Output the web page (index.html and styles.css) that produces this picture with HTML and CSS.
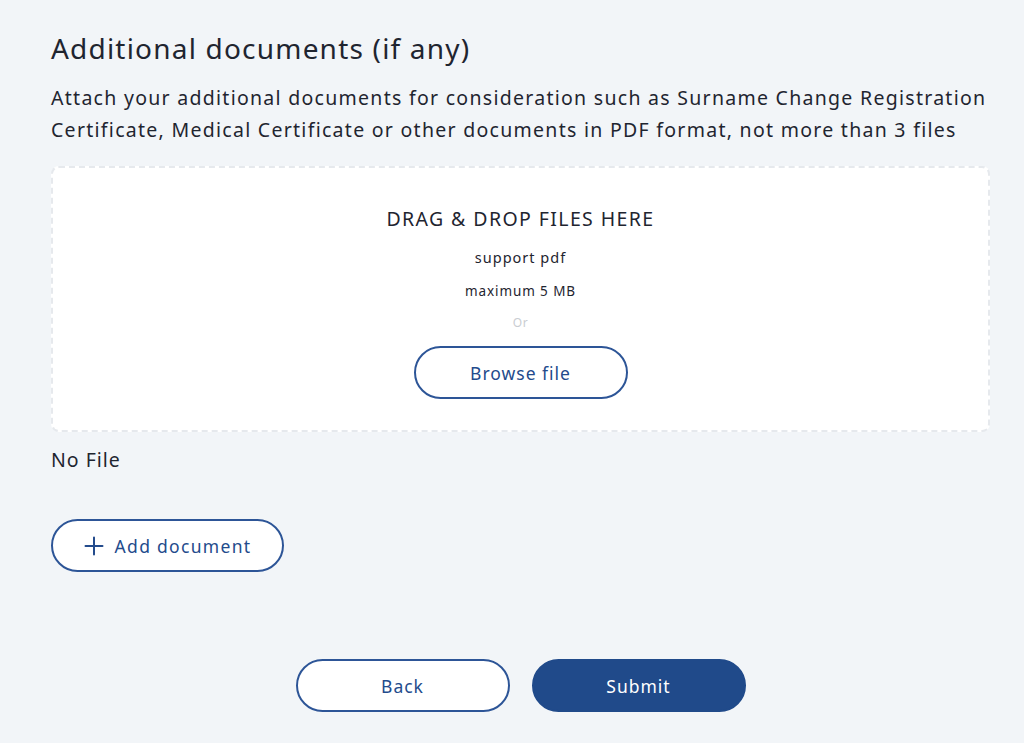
FILE: index.html
```html
<!DOCTYPE html>
<html lang="en">
<head>
<meta charset="utf-8">
<link rel="stylesheet" href="styles.css">
</head>
<body>
<main class="page">
  <h1 class="title">Additional documents (if any)</h1>
  <p class="desc">Attach your additional documents for consideration such as Surname Change Registration Certificate, Medical Certificate or other documents in PDF format, not more than 3 files</p>
  <section class="dropzone">
    <div class="dz-title">DRAG &amp; DROP FILES HERE</div>
    <div class="dz-support">support pdf</div>
    <div class="dz-max">maximum 5 MB</div>
    <div class="dz-or">Or</div>
    <button class="btn btn-outline btn-browse">Browse file</button>
  </section>
  <div class="nofile">No File</div>
  <button class="btn btn-outline btn-add">
    <svg class="plus" width="20" height="20" viewBox="0 0 20 20"><path d="M10 1.5v17M1.5 10h17" stroke="currentColor" stroke-width="2" stroke-linecap="round" fill="none"/></svg>
    <span>Add document</span>
  </button>
  <div class="actions">
    <button class="btn btn-outline btn-action">Back</button>
    <button class="btn btn-solid btn-action">Submit</button>
  </div>
</main>
</body>
</html>
```
FILE: styles.css
```css
html, body {
  margin: 0;
  padding: 0;
  background: #f2f5f8;
}
body {
  font-family: "Noto Sans", "Open Sans", sans-serif;
  color: #1f2530;
}
.page {
  width: 939px;
  padding: 28px 0 0 51px;
  display: flex;
  flex-direction: column;
}
.title {
  margin: 0;
  font-size: 28px;
  font-weight: 400;
  line-height: 40px;
  letter-spacing: 1.2px;
}
.desc {
  margin: 14px 0 0;
  font-size: 19.5px;
  line-height: 32px;
  letter-spacing: 1.28px;
}
.dropzone {
  margin-top: 20px;
  height: 266px;
  background: #fff;
  border: 2px dashed #e6e9ed;
  border-radius: 8px;
  display: flex;
  flex-direction: column;
  align-items: center;
  padding-top: 37px;
  box-sizing: border-box;
}
.dz-title {
  font-size: 19.5px;
  line-height: 28px;
  letter-spacing: 1.4px;
}
.dz-support {
  margin-top: 13px;
  font-size: 14.5px;
  line-height: 22px;
  letter-spacing: 1px;
}
.dz-max {
  margin-top: 12px;
  font-size: 13.5px;
  line-height: 22px;
  letter-spacing: 0.9px;
}
.dz-or {
  margin-top: 11px;
  font-size: 12px;
  line-height: 20px;
  color: #c9cdd2;
  letter-spacing: 0.5px;
}
.btn {
  font-family: inherit;
  border-radius: 999px;
  cursor: pointer;
  display: flex;
  align-items: center;
  justify-content: center;
  box-sizing: border-box;
  font-size: 17.5px;
  letter-spacing: 1px;
}
.btn-outline {
  background: #fff;
  border: 2px solid #2d5597;
  color: #234b8c;
}
.btn-solid {
  background: #204a8a;
  border: 2px solid #204a8a;
  color: #fff;
}
.btn-browse {
  margin-top: 13px;
  width: 214px;
  height: 53px;
}
.nofile {
  margin-top: 14px;
  font-size: 19.5px;
  line-height: 28px;
  letter-spacing: 1px;
}
.btn-add {
  margin-top: 45px;
  width: 233px;
  height: 53px;
  gap: 11px;
  align-self: flex-start;
  letter-spacing: 1.3px;
}
.plus {
  display: block;
}
.actions {
  margin-top: 87px;
  display: flex;
  justify-content: center;
  gap: 22px;
}
.btn-action {
  width: 214px;
  height: 53px;
}
```
